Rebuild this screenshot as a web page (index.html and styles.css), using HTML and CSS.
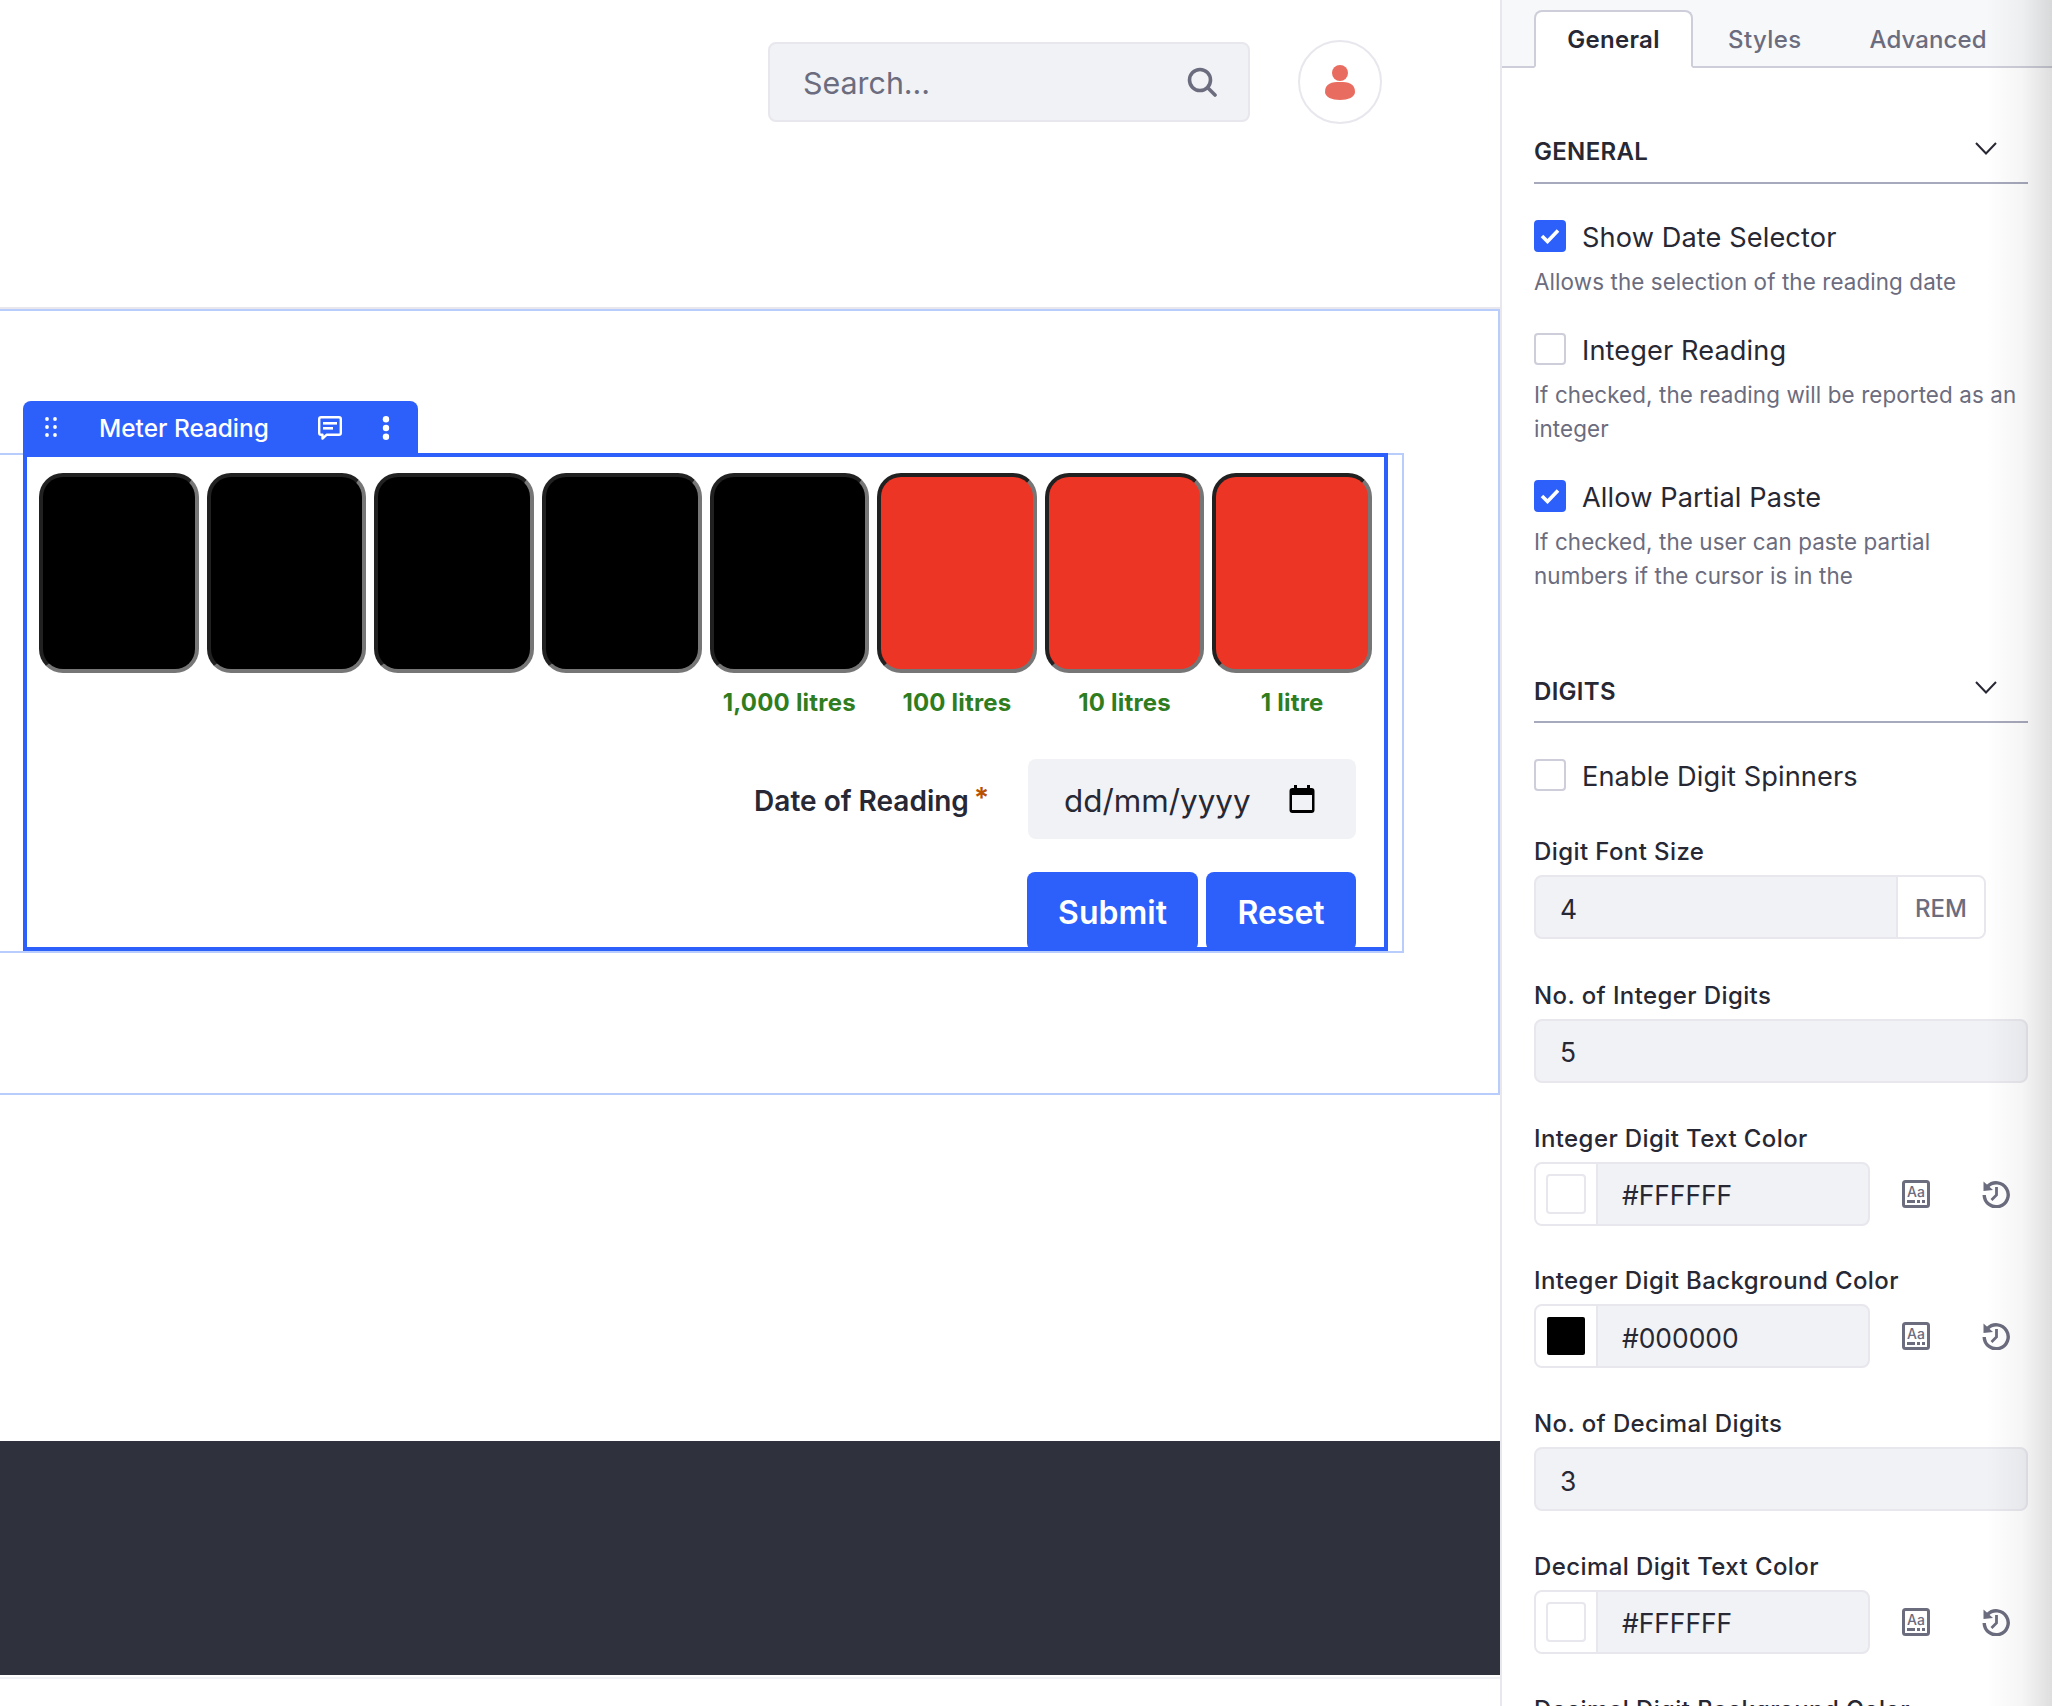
FILE: index.html
```html
<!DOCTYPE html>
<html lang="en">
<head>
<meta charset="utf-8">
<title>Meter Reading</title>
<link rel="stylesheet" href="styles.css">
</head>
<body>
<div class="page">
  <main class="main">
    <header class="topbar">
      <div class="search">
        <span class="search-text">Search...</span>
        <svg class="search-icon" viewBox="0 0 30 30" width="30" height="30"><circle cx="13" cy="13" r="10.5" fill="none" stroke="#6b6c7e" stroke-width="3.6"/><line x1="21" y1="21" x2="28" y2="28" stroke="#6b6c7e" stroke-width="3.6" stroke-linecap="round"/></svg>
      </div>
      <div class="avatar">
        <svg viewBox="0 0 32 36" width="32" height="36"><circle cx="16" cy="8" r="8" fill="#e96c60"/><path d="M1 27C1 18 8 17 16 17s15 1 15 10c0 5-7 8-15 8S1 32 1 27z" fill="#e96c60"/></svg>
      </div>
    </header>

    <section class="section">
      <div class="fragment">
        <div class="meter">
          <div class="toolbar">
            <svg class="grip" viewBox="0 0 12 20" width="12" height="20"><g fill="#fff"><circle cx="2" cy="2" r="1.9"/><circle cx="10" cy="2" r="1.9"/><circle cx="2" cy="10" r="1.9"/><circle cx="10" cy="10" r="1.9"/><circle cx="2" cy="18" r="1.9"/><circle cx="10" cy="18" r="1.9"/></g></svg>
            <span class="toolbar-title">Meter Reading</span>
            <svg class="comment" viewBox="0 0 24 24" width="24" height="24"><path d="M3 1.200h18A1.800 1.800 0 0 1 22.800 3v14a1.800 1.800 0 0 1-1.800 1.800H8.500L4.500 22.600v-3.800H3A1.800 1.800 0 0 1 1.200 17V3A1.800 1.800 0 0 1 3 1.200z" fill="none" stroke="#fff" stroke-width="2.400" stroke-linejoin="round"/><rect x="5" y="6" width="14" height="2.600" fill="#fff"/><rect x="5" y="11" width="10" height="2.600" fill="#fff"/></svg>
            <svg class="kebab" viewBox="0 0 8 24" width="8" height="24"><g fill="#fff"><circle cx="4" cy="3.200" r="3.200"/><circle cx="4" cy="12" r="3.200"/><circle cx="4" cy="20.800" r="3.200"/></g></svg>
          </div>
          <div class="digits">
            <div class="digit"></div><div class="digit"></div><div class="digit"></div><div class="digit"></div><div class="digit"></div>
            <div class="digit digit-red"></div><div class="digit digit-red"></div><div class="digit digit-red"></div>
          </div>
          <div class="units">
            <span></span><span></span><span></span><span></span>
            <span>1,000 litres</span><span>100 litres</span><span>10 litres</span><span>1 litre</span>
          </div>
          <div class="date-row">
            <div class="date-label">Date of Reading<span class="req">*</span></div>
            <div class="date-input">
              <span class="date-text">dd/mm/yyyy</span>
              <svg viewBox="0 0 26 28" width="26" height="28"><rect x="5" y="0" width="3" height="5" fill="#000"/><rect x="18" y="0" width="3" height="5" fill="#000"/><path d="M3.500 3h19A3 3 0 0 1 25.500 6v19a3 3 0 0 1-3 3h-19a3 3 0 0 1-3-3V6a3 3 0 0 1 3-3zM3 10v15h20V10z" fill="#000" fill-rule="evenodd"/></svg>
            </div>
          </div>
          <div class="actions">
            <div class="btn btn-submit">Submit</div>
            <div class="btn btn-reset">Reset</div>
          </div>
        </div>
      </div>
    </section>

    <div class="spacer"></div>
    <footer class="footer"></footer>
    <div class="footer-rule"></div>
  </main>

  <aside class="side">
    <nav class="tabs">
      <div class="tab tab-active">General</div>
      <div class="tab tab-styles">Styles</div>
      <div class="tab tab-advanced">Advanced</div>
    </nav>
    <div class="side-body">
      <div class="sec-head">
        <span>GENERAL</span>
        <svg viewBox="0 0 22 13" width="22" height="13"><polyline points="1,1 11,11.500 21,1" fill="none" stroke="#272833" stroke-width="2"/></svg>
      </div>
      <div class="check first-check">
        <span class="box box-on"><svg viewBox="0 0 20 16" width="20" height="16"><polyline points="2,8 7.500,13.500 18,2.500" fill="none" stroke="#fff" stroke-width="3.600"/></svg></span>
        <span class="check-text">Show Date Selector</span>
      </div>
      <p class="help">Allows the selection of the reading date</p>
      <div class="check">
        <span class="box"></span>
        <span class="check-text">Integer Reading</span>
      </div>
      <p class="help">If checked, the reading will be reported as an<br>integer</p>
      <div class="check">
        <span class="box box-on"><svg viewBox="0 0 20 16" width="20" height="16"><polyline points="2,8 7.500,13.500 18,2.500" fill="none" stroke="#fff" stroke-width="3.600"/></svg></span>
        <span class="check-text">Allow Partial Paste</span>
      </div>
      <p class="help">If checked, the user can paste partial<br>numbers if the cursor is in the</p>

      <div class="sec-head sec-digits">
        <span>DIGITS</span>
        <svg viewBox="0 0 22 13" width="22" height="13"><polyline points="1,1 11,11.500 21,1" fill="none" stroke="#272833" stroke-width="2"/></svg>
      </div>
      <div class="check first-check">
        <span class="box"></span>
        <span class="check-text">Enable Digit Spinners</span>
      </div>

      <div class="field field-first">
        <label class="lbl">Digit Font Size</label>
        <div class="input input-rem"><span class="val">4</span><span class="rem"><span class="rem-text">REM</span></span></div>
      </div>
      <div class="field field-second">
        <label class="lbl">No. of Integer Digits</label>
        <div class="input"><span class="val">5</span></div>
      </div>
      <div class="field">
        <label class="lbl">Integer Digit Text Color</label>
        <div class="color-row">
          <div class="input input-color"><span class="swatch-cell"><span class="swatch"></span></span><span class="val">#FFFFFF</span></div>
          <svg class="ico-aa" viewBox="0 0 28 28" width="28" height="28"><rect x="1.500" y="1.500" width="25" height="25" rx="2" fill="none" stroke="#6b6c7e" stroke-width="3"/><text x="14" y="17" text-anchor="middle" class="aa-text">Aa</text><rect x="5" y="20" width="8" height="3" fill="#6b6c7e"/><rect x="15" y="20" width="3" height="3" fill="#6b6c7e"/><rect x="20" y="20" width="3" height="3" fill="#6b6c7e"/></svg>
          <svg class="ico-hist" viewBox="0 0 28 28" width="28" height="28"><path d="M5.500 6.500A12 12 0 1 1 2.200 15" fill="none" stroke="#6b6c7e" stroke-width="3.400"/><polygon points="1.500,1.500 1.500,11 11,10" fill="#6b6c7e"/><path d="M14.500 7v8L9.500 20" fill="none" stroke="#6b6c7e" stroke-width="2.800"/></svg>
        </div>
      </div>
      <div class="field">
        <label class="lbl">Integer Digit Background Color</label>
        <div class="color-row">
          <div class="input input-color"><span class="swatch-cell"><span class="swatch swatch-black"></span></span><span class="val">#000000</span></div>
          <svg class="ico-aa" viewBox="0 0 28 28" width="28" height="28"><rect x="1.500" y="1.500" width="25" height="25" rx="2" fill="none" stroke="#6b6c7e" stroke-width="3"/><text x="14" y="17" text-anchor="middle" class="aa-text">Aa</text><rect x="5" y="20" width="8" height="3" fill="#6b6c7e"/><rect x="15" y="20" width="3" height="3" fill="#6b6c7e"/><rect x="20" y="20" width="3" height="3" fill="#6b6c7e"/></svg>
          <svg class="ico-hist" viewBox="0 0 28 28" width="28" height="28"><path d="M5.500 6.500A12 12 0 1 1 2.200 15" fill="none" stroke="#6b6c7e" stroke-width="3.400"/><polygon points="1.500,1.500 1.500,11 11,10" fill="#6b6c7e"/><path d="M14.500 7v8L9.500 20" fill="none" stroke="#6b6c7e" stroke-width="2.800"/></svg>
        </div>
      </div>
      <div class="field">
        <label class="lbl">No. of Decimal Digits</label>
        <div class="input"><span class="val">3</span></div>
      </div>
      <div class="field">
        <label class="lbl">Decimal Digit Text Color</label>
        <div class="color-row">
          <div class="input input-color"><span class="swatch-cell"><span class="swatch"></span></span><span class="val">#FFFFFF</span></div>
          <svg class="ico-aa" viewBox="0 0 28 28" width="28" height="28"><rect x="1.500" y="1.500" width="25" height="25" rx="2" fill="none" stroke="#6b6c7e" stroke-width="3"/><text x="14" y="17" text-anchor="middle" class="aa-text">Aa</text><rect x="5" y="20" width="8" height="3" fill="#6b6c7e"/><rect x="15" y="20" width="3" height="3" fill="#6b6c7e"/><rect x="20" y="20" width="3" height="3" fill="#6b6c7e"/></svg>
          <svg class="ico-hist" viewBox="0 0 28 28" width="28" height="28"><path d="M5.500 6.500A12 12 0 1 1 2.200 15" fill="none" stroke="#6b6c7e" stroke-width="3.400"/><polygon points="1.500,1.500 1.500,11 11,10" fill="#6b6c7e"/><path d="M14.500 7v8L9.500 20" fill="none" stroke="#6b6c7e" stroke-width="2.800"/></svg>
        </div>
      </div>
      <div class="field">
        <label class="lbl">Decimal Digit Background Color</label>
      </div>
    </div>
    <div class="shade"></div>
  </aside>
</div>
</body>
</html>
```
FILE: styles.css
```css
* { box-sizing: border-box; }
html, body { margin: 0; padding: 0; background: #fff; }
body { font-family: Inter, "Liberation Sans", sans-serif; color: #272833; }
.page { display: flex; width: 2052px; height: 1706px; overflow: hidden; }

.main { flex: 0 0 1500px; display: flex; flex-direction: column; height: 1706px; }
.topbar { flex: 0 0 309px; display: flex; align-items: flex-start; padding: 40px 0 0 768px; border-bottom: 2px solid #e7e7ed; }
.search { width: 482px; height: 80px; margin-top: 2px; display: flex; align-items: center; justify-content: space-between; padding: 0 31px 0 33px; background: #f1f2f5; border: 2px solid #e7e7ed; border-radius: 8px; font-size: 30.400px; color: #6b6c7e; }
.search-text { padding-top: 2px; }
.avatar { width: 84px; height: 84px; margin-left: 48px; display: flex; align-items: center; justify-content: center; border: 2px solid #e7e7ed; border-radius: 50%; padding-top: 2px; }

.section { flex: 0 0 786px; padding-top: 142px; border-top: 2px solid #b9cdfc; border-right: 2px solid #b9cdfc; border-bottom: 2px solid #b9cdfc; }
.fragment { width: 1404px; height: 500px; border-top: 2px solid #b9cdfc; border-right: 2px solid #b9cdfc; border-bottom: 2px solid #b9cdfc; padding-left: 23px; }
.meter { position: relative; width: 1365px; height: 498px; margin-top: -2px; border: 4px solid #2d5ffb; padding: 16px 12px 0; }
.toolbar { position: absolute; left: -4px; bottom: 100%; width: 395px; height: 52px; margin-bottom: 4px; padding-top: 2px; display: flex; align-items: center; background: #2d5ffb; border-radius: 8px 8px 0 0; color: #fff; }
.grip { margin: -2px 0 0 22px; }
.toolbar-title { margin-left: 42px; font-size: 24.400px; font-weight: 500; width: 176px; white-space: nowrap; }
.comment { margin-left: 43px; }
.kebab { margin-left: 40px; }

.digits, .units { display: grid; grid-template-columns: repeat(8, 1fr); column-gap: 8px; }
.digit { height: 200px; border: 4px inset #767676; border-radius: 24px; background: #000; }
.digit-red { background: #ec3524; }
.units { margin-top: 14px; height: 32px; line-height: 32px; text-align: center; font-size: 24px; font-weight: 700; letter-spacing: .2px; color: #2f7d1f; }

.date-row { margin-top: 40px; padding-right: 16px; display: flex; justify-content: flex-end; align-items: center; }
.date-label { font-size: 28px; font-weight: 600; margin-right: 39px; padding-top: 4px; white-space: nowrap; }
.req { font-size: 28px; color: #b95000; margin-left: 5px; position: relative; top: -3px; }
.date-input { width: 328px; height: 80px; display: flex; align-items: center; justify-content: space-between; padding: 0 41px 0 36px; background: #f1f2f5; border-radius: 8px; font-size: 31.400px; }
.date-text { padding-top: 4px; }

.actions { margin-top: 33px; padding-right: 16px; display: flex; justify-content: flex-end; gap: 8px; }
.btn { height: 79px; padding-top: 2px; display: flex; align-items: center; justify-content: center; background: #2d5ffb; color: #fff; border-radius: 8px; font-size: 32px; font-weight: 600; }
.btn-submit { width: 171px; }
.btn-reset { width: 150px; }

.spacer { flex: 1 1 auto; }
.footer { flex: 0 0 234px; background: #2f313d; }
.footer-rule { flex: 0 0 2px; margin: 2px 0 27px; background: #f1f2f5; }

.side { position: relative; flex: 0 0 552px; height: 1706px; overflow: hidden; border-left: 2px solid #e7e7ed; background: #fff; }
.tabs { height: 68px; display: flex; align-items: flex-end; padding-left: 32px; background: #f7f8f9; border-bottom: 2px solid #cdced9; }
.tab { height: 58px; margin-bottom: -2px; display: flex; align-items: center; justify-content: center; font-size: 24px; font-weight: 500; color: #6b6c7e; letter-spacing: .4px; }
.tab-active { width: 159px; background: #fff; border: 2px solid #cdced9; border-bottom-color: #fff; border-radius: 8px 8px 0 0; color: #272833; font-weight: 600; letter-spacing: .3px; }
.tab-styles { margin-left: 35px; }
.tab-advanced { margin-left: 68px; letter-spacing: .1px; }

.side-body { padding: 0 24px 0 32px; }
.sec-head { margin-top: 66px; height: 50px; line-height: 34px; padding: 1px 0 13px; border-bottom: 2px solid #a7a9bc; display: flex; justify-content: space-between; align-items: flex-start; font-size: 24px; font-weight: 600; letter-spacing: .3px; }
.sec-head svg { margin: 7px 31px 0 0; }
.sec-digits { margin-top: 80.500px; padding-top: 2px; }
.sec-digits svg { margin-top: 6px; }
.check { display: flex; align-items: center; gap: 16px; height: 32px; font-size: 27.200px; margin-top: 34.500px; letter-spacing: .1px; }
.first-check { margin-top: 36px; }
.check-text { padding-top: 2px; }
.box { flex: 0 0 32px; width: 32px; height: 32px; display: flex; align-items: center; justify-content: center; background: #fff; border: 2px solid #cdced9; border-radius: 4px; }
.box-on { background: #2d5ffb; border-color: #2d5ffb; }
.help { margin: 12.500px 0 0; font-size: 22.400px; line-height: 34px; color: #6b6c7e; letter-spacing: .1px; white-space: nowrap; }

.field { margin-top: 36.800px; }
.field-first { margin-top: 42px; }
.field-second { margin-top: 37.800px; }
.lbl { display: block; height: 32px; padding-top: 3px; line-height: 32px; margin-bottom: 10px; font-size: 24px; font-weight: 500; letter-spacing: .4px; white-space: nowrap; }
.input { height: 64px; display: flex; align-items: center; padding-left: 24px; background: #f1f2f5; border: 2px solid #e7e7ed; border-radius: 8px; font-size: 26.400px; }
.val { padding-top: 3px; }
.input-rem { width: 452px; justify-content: space-between; padding-right: 0; }
.rem { width: 88px; height: 60px; display: flex; align-items: center; justify-content: center; background: #fff; border-left: 2px solid #e7e7ed; border-radius: 0 6px 6px 0; font-size: 24px; font-weight: 500; color: #6b6c7e; }
.rem-text { padding-top: 2px; }
.color-row { display: flex; align-items: center; }
.input-color { flex: 0 0 336px; padding-left: 0; }
.swatch-cell { flex: 0 0 62px; height: 60px; display: flex; align-items: center; justify-content: center; background: #fff; border-right: 2px solid #e7e7ed; border-radius: 6px 0 0 6px; margin-right: 24px; }
.swatch { width: 40px; height: 40px; background: #fff; border: 2px solid #e7e7ed; border-radius: 4px; }
.swatch-black { width: 38px; height: 38px; background: #000; border-color: #000; border-radius: 2px; }
.ico-aa { margin-left: 32px; }
.ico-hist { margin-left: 52px; }
.aa-text { font-family: Inter, sans-serif; font-size: 14px; font-weight: 500; fill: #6b6c7e; }
.shade { position: absolute; top: 0; right: 0; bottom: 0; width: 66px; pointer-events: none; background: linear-gradient(to right, rgba(0,0,0,0), rgba(0,0,0,.04) 55%, rgba(0,0,0,.13)); }
```
